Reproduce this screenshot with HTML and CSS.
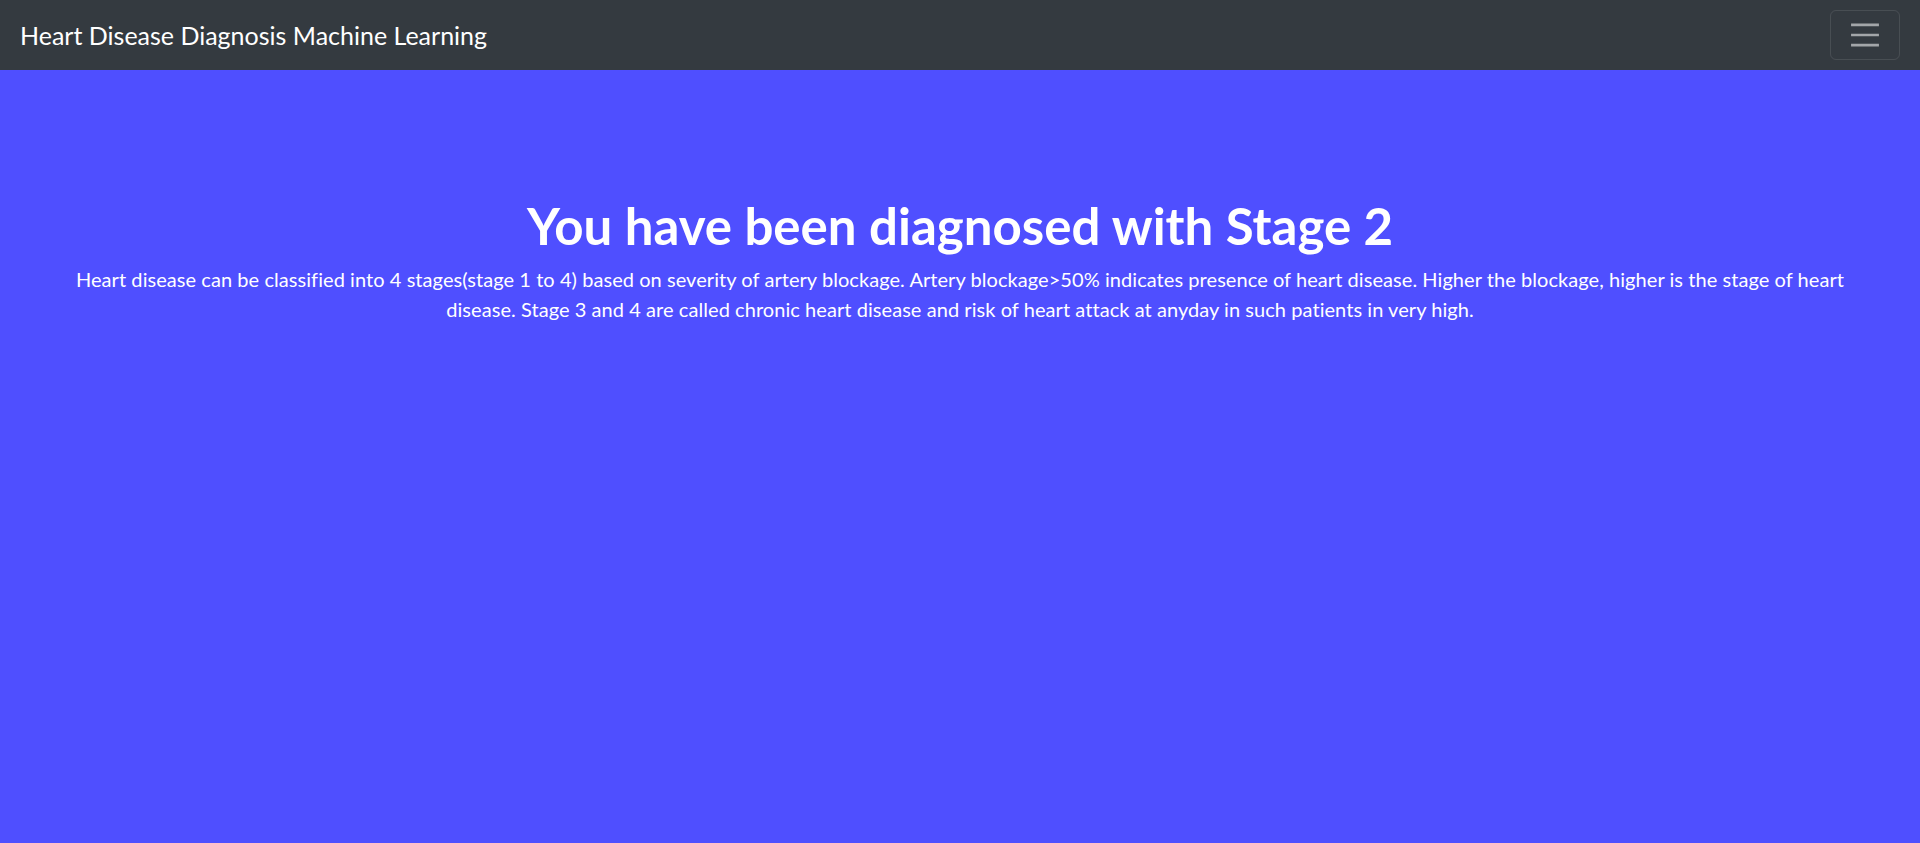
FILE: index.html
```html
<!DOCTYPE html>
<html lang="en">
<head>
<meta charset="utf-8">
<title>Heart Disease Diagnosis Machine Learning</title>
<link rel="stylesheet" href="styles.css">
</head>
<body>
<nav class="navbar">
  <a class="brand" href="#">Heart Disease Diagnosis Machine Learning</a>
  <button class="toggler" type="button" aria-label="Toggle navigation">
    <svg class="toggler-icon" viewBox="0 0 30 30" aria-hidden="true">
      <path d="M4 7h22M4 15h22M4 23h22" stroke="rgba(255,255,255,0.55)" stroke-width="2" stroke-linecap="butt" fill="none"/>
    </svg>
  </button>
</nav>
<main class="main">
  <section class="result">
    <h1 class="result-title">You have been diagnosed with Stage 2</h1>
    <p class="result-text">Heart disease can be classified into 4 stages(stage 1 to 4) based on severity of artery blockage. Artery blockage&gt;50% indicates presence of heart disease. Higher the blockage, higher is the stage of heart disease. Stage 3 and 4 are called chronic heart disease and risk of heart attack at anyday in such patients in very high.</p>
  </section>
</main>
</body>
</html>
```
FILE: styles.css
```css
html, body {
  margin: 0;
  padding: 0;
}

body {
  min-height: 100vh;
  display: flex;
  flex-direction: column;
  font-family: "Lato", "Open Sans", sans-serif;
  font-size: 20px;
  line-height: 1.5;
  color: #ffffff;
  background: #4f4fff;
}

.navbar {
  display: flex;
  align-items: center;
  justify-content: space-between;
  padding: 10px 20px;
  background: #343a40;
}

.brand {
  font-size: 25px;
  line-height: 37.5px;
  padding-top: 2px;
  color: #ffffff;
  text-decoration: none;
  white-space: nowrap;
}

.toggler {
  width: 70px;
  height: 50px;
  padding: 0;
  display: flex;
  align-items: center;
  justify-content: center;
  background: transparent;
  border: 1px solid rgba(255, 255, 255, 0.1);
  border-radius: 6px;
  cursor: pointer;
}

.toggler-icon {
  width: 38px;
  height: 38px;
  display: block;
}

.main {
  flex: 1;
  background: #4f4fff;
  padding-top: 125px;
}

.result {
  text-align: center;
  padding: 0 50px;
}

.result-title {
  margin: 0 0 8px;
  font-size: 51px;
  font-weight: 700;
  line-height: 1.2;
}

.result-text {
  margin: 0;
  font-size: 20px;
  line-height: 30px;
  letter-spacing: 0.06px;
}
```
